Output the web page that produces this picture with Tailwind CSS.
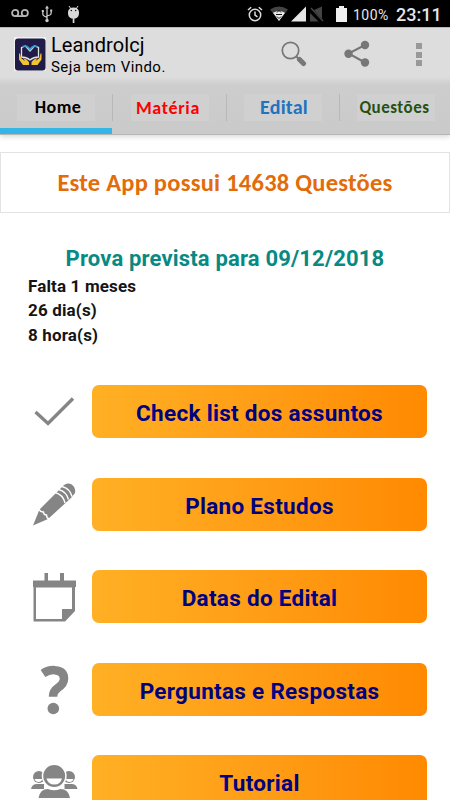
<!DOCTYPE html>
<html lang="pt-BR">
<head>
  <meta charset="UTF-8">
  <title>Leandrolcj</title>
  <meta name="viewport" content="width=device-width, initial-scale=1.0">
  <script src="https://cdn.jsdelivr.net/npm/@tailwindcss/browser@4"></script>
</head>
<body class="h-screen overflow-hidden bg-white font-['Roboto',sans-serif]">

  <!-- Status bar -->
  <div class="flex h-[27px] items-center bg-black text-[#e6e6e6]">
    <svg class="ml-[11px] h-[9px] w-[18px]" viewBox="0 0 18 9" fill="none" stroke="#b5b5b5" stroke-width="1.8">
      <circle cx="4.2" cy="4" r="3.1"/><circle cx="13.8" cy="4" r="3.1"/><path d="M4 7.1h10"/>
    </svg>
    <svg class="ml-3 h-[18px] w-[12px]" viewBox="0 0 12 18" fill="#c9c9c9" stroke="#c9c9c9">
      <path d="M6 2v13M1.8 6v3q0 1.5 1.3 2L6 12.5M10.2 6v2q0 1.5-1.3 2L6 11" fill="none" stroke-width="1.3"/>
      <path d="M6 .5l2 3H4zM.8 5h2v2h-2zM9.2 4.5h2v2h-2z" stroke="none"/>
      <circle cx="6" cy="15.5" r="1.7" stroke="none"/>
    </svg>
    <svg class="ml-[14px] h-[18px] w-[13px]" viewBox="0 0 13 18" fill="#d8d8d8">
      <path d="M2 1l2 3M11 1L9 4" stroke="#d8d8d8"/>
      <path d="M1 7q.5-4.500 5.500-4.500T12 7q.5 5-3.500 6.500h-4Q.5 12 1 7zM5.700 13h1.700v5H5.700z"/>
      <circle cx="4.300" cy="5.500" r=".7" fill="#000"/><circle cx="8.700" cy="5.500" r=".7" fill="#000"/>
    </svg>
    <svg class="ml-auto h-[16px] w-[16px]" viewBox="0 0 16 16" fill="none" stroke="#dedede" stroke-width="1.500">
      <circle cx="8" cy="9" r="5.700"/><path d="M8 5.500V9l2.500 1.800M1 4l3.200-2.800M15 4l-3.200-2.800"/>
    </svg>
    <svg class="ml-[7px] h-[16px] w-[18px]" viewBox="0 0 18 16">
      <path d="M0 3.500Q9-2.500 18 3.500L9 15z" fill="#444"/>
      <path d="M3 6.800Q9 3 15 6.800L9 15z" fill="#eee"/>
      <path d="M7 6.500L9 4.500l2 2M6 8.500h6M7 10.500l2 2 2-2" fill="none" stroke="#111"/>
    </svg>
    <svg class="ml-[3px] h-[16px] w-[15px]" viewBox="0 0 15 16"><path d="M0 15.500L15 .5v15z" fill="#e6e6e6"/></svg>
    <svg class="ml-[4px] h-[16px] w-[14px]" viewBox="0 0 14 16"><path d="M4 4l8-3.500V13zM0 7l8.500 8.500H0z" fill="#444"/><path d="M1 2l12 13" stroke="#444" stroke-width="1.500"/></svg>
    <svg class="ml-[12px] h-[16px] w-[11px]" viewBox="0 0 11 16"><path d="M3 0h5v2h3v14H0V2h3z" fill="#efefef"/></svg>
    <span class="ml-[6px] mt-[3px] w-[37px] text-[14px] leading-4 tracking-[0.500px]">100%</span>
    <span class="mt-[3px] ml-[6px] mr-[9px] w-[45px] text-[18px] leading-5 font-medium">23:11</span>
  </div>

  <!-- App header -->
  <header class="flex h-[53px] border-t border-[#b8b8b8] bg-[#ddd] text-black">
    <svg class="mt-[9px] ml-[14px] h-[35px] w-[32px]" viewBox="0 0 32 35">
      <rect width="32" height="34" fill="#f1f1f1"/>
      <rect x="1" y="1.500" width="30.500" height="32" rx="3" fill="#211c47"/>
      <path d="M7.500 10.500l4-1.500 4.500 5 4.500-5 4 1.500v9.500q-5 0-8.500 3-3.500-3-8.500-3z" fill="none" stroke="#dfe3ea" stroke-width="1.300"/>
      <path d="M9 9.500q4-1.500 7 3 3-4.500 7-3" fill="none" stroke="#3c9bd0" stroke-width="1.800"/>
      <path d="M5 16.500v6l4 5.500h6v-3q-2-3-6-4l2 3-4-3-1-4.500zM27.500 16.500v6l-4 5.500h-6v-3q2-3 6-4l-2 3 4-3 1-4.500z" fill="#f2c52e"/>
    </svg>
    <div class="ml-[5px] mt-[5px]">
      <div class="text-[20px] leading-6 tracking-[0.100px]">Leandrolcj</div>
      <div class="text-[15px] leading-5 tracking-[0.450px]">Seja bem Vindo.</div>
    </div>
    <div class="ml-auto mr-[28px] flex">
      <svg class="mt-[12px] h-[28px] w-[26px]" viewBox="0 0 26 28" fill="none" stroke="#777">
        <circle cx="9.500" cy="10.500" r="8.200" stroke-width="1.700"/>
        <path d="M15 16l3 3.300" stroke-width="2"/><path d="M18.500 19.500l4 4" stroke-width="5" stroke-linecap="round"/>
      </svg>
      <svg class="mt-[12px] ml-[37px] h-[28px] w-[26px]" viewBox="0 0 26 28" fill="#777">
        <path d="M21 5L4.500 13.500 21 22.500" fill="none" stroke="#777" stroke-width="2"/>
        <circle cx="21" cy="5" r="4.200"/><circle cx="4.500" cy="13.700" r="4.200"/><circle cx="21" cy="22.500" r="4.200"/>
      </svg>
      <div class="mt-[15px] ml-[46px] flex w-[6px] flex-col gap-[2.500px]">
        <i class="h-[6px] bg-[#999]"></i>
        <i class="h-[6px] bg-[#999]"></i>
        <i class="h-[6px] bg-[#999]"></i>
      </div>
    </div>
  </header>

  <!-- Tabs -->
  <nav class="grid h-[55px] grid-cols-[112px_114px_113px_111px] border-b border-[#b5b5b5] bg-linear-to-b from-[#d6d6d6] via-[#cdcdcd] via-10% to-[#cacaca] font-['Carlito','Open_Sans',sans-serif] font-bold shadow-[0_2px_5px_rgba(0,0,0,0.15)]">
    <div class="flex flex-col border-b-[6px] border-[#33b5e5] pt-[14px]">
      <div class="ml-[17px] h-[27px] w-[78px] bg-[#d0d0d0] pl-[4px] text-center text-[18px] leading-[27px] tracking-[0.500px] text-black">Home</div>
    </div>
    <div class="mt-[14px] h-[27px] border-l border-[#b8b8b8]">
      <div class="ml-[18px] h-[27px] w-[78px] bg-[#d0d0d0] pr-[4px] text-center text-[18px] leading-[28px] tracking-[0.700px] text-[#fe0000]">Matéria</div>
    </div>
    <div class="mt-[14px] h-[27px] border-l border-[#b8b8b8]">
      <div class="ml-[17px] h-[27px] w-[78px] bg-[#d0d0d0] pl-[2px] text-center text-[20px] leading-[27px] tracking-[0.200px] text-[#2273bd]">Edital</div>
    </div>
    <div class="mt-[14px] h-[27px] border-l border-[#b8b8b8]">
      <div class="ml-[17px] h-[27px] w-[78px] bg-[#d0d0d0] pr-[3px] text-center text-[17px] leading-[27px] tracking-[0.500px] text-[#285010]">Questões</div>
    </div>
  </nav>

  <!-- Question count -->
  <div class="mt-[17px] flex h-[61px] items-center justify-center border border-[#e3e3e3] pt-[2px] font-['Carlito','Open_Sans',sans-serif] text-[24.500px] font-semibold tracking-[0.250px] text-[#e36c0a]">
    <span class="whitespace-nowrap">Este App possui 14638 Questões</span>
  </div>

  <!-- Countdown -->
  <h1 class="mt-[33px] text-center text-[22px] leading-[26px] font-bold tracking-[0.170px] text-[#078a83]">Prova prevista para 09/12/2018</h1>
  <div class="mt-[2px] ml-[28px] text-[17px] leading-[24.300px] font-bold tracking-[0.150px] text-[#151515]">
    <p>Falta 1 meses</p>
    <p>26 dia(s)</p>
    <p>8 hora(s)</p>
  </div>

  <!-- Menu -->
  <main class="mt-[38.200px] grid grid-cols-[92px_335px] auto-rows-[53px] gap-y-[39.500px] text-[22.500px] leading-[26px] font-bold tracking-[0.300px] text-[#000080]">
    <svg class="h-[53px] w-[92px]" viewBox="0 0 92 53" fill="none" stroke="#858585" stroke-width="3.400"><path d="M35.500 27L48 38.500 73 13.500"/></svg>
    <button class="rounded-[7px] bg-linear-to-r from-[#ffb024] to-[#ff8a00] pt-[3px]">Check list dos assuntos</button>

    <svg class="h-[53px] w-[92px]" viewBox="0 0 92 53" fill="#858585">
      <path d="M33 47.500l6.500-16L62 9q4-5 9-3 5 3 4 9l-4 5-23 21z"/>
      <path d="M39 31.500q2 3 4.500 2.500 0 3 3 3 0 3 2.500 4M55 14.500q8 2 10 10.500M58.500 11.500q8 2 10 10M62 8.500q8 2 10 10" fill="none" stroke="#fff" stroke-width="1.400"/>
    </svg>
    <button class="rounded-[7px] bg-linear-to-r from-[#ffb024] to-[#ff8a00] pt-[3px]">Plano Estudos</button>

    <svg class="h-[53px] w-[92px]" viewBox="0 0 92 53" fill="#858585">
      <path d="M33 10.500h11.500V3H48v7.500h12V3h4v7.500h12V17h-1v24L65 51.500H33.500V17H33zM36 17.500V49h26V39h10V17.500z" fill-rule="evenodd"/>
    </svg>
    <button class="rounded-[7px] bg-linear-to-r from-[#ffb024] to-[#ff8a00] pt-[3px]">Datas do Edital</button>

    <svg class="h-[53px] w-[92px]" viewBox="0 0 92 53">
      <path d="M43 10.500q6-4 12-3.300 9 .8 9 8.500 0 5-6 9-5 3.500-5 9" fill="none" stroke="#858585" stroke-width="8.500"/>
      <circle cx="53.300" cy="45.500" r="5.800" fill="#858585"/>
    </svg>
    <button class="rounded-[7px] bg-linear-to-r from-[#ffb024] to-[#ff8a00] pt-[3px]">Perguntas e Respostas</button>

    <svg class="h-[53px] w-[92px]" viewBox="0 0 92 53" fill="#858585">
      <circle cx="39" cy="22" r="6"/><circle cx="69" cy="22" r="6"/>
      <path d="M34.500 24h8q-1 3-4 3t-4-3zM65.500 24h8q-1 3-4 3t-4-3z" fill="#fff"/>
      <path d="M31 34q1-5 6-5h7v5zM77.500 34q-1-5-6-5h-7v5z"/>
      <circle cx="54.200" cy="21" r="11.700" stroke="#fff" stroke-width="1.500"/>
      <path d="M46.500 23.500h15.500q-1.500 6-7.700 6t-7.800-6z" fill="#fff"/>
      <path d="M38.500 43q1.500-9 9.500-9 6 2.500 12.500 0 8 0 9.500 9z"/>
    </svg>
    <button class="rounded-[7px] bg-linear-to-r from-[#ffb024] to-[#ff8a00] pt-[3px]">Tutorial</button>
  </main>

</body>
</html>
